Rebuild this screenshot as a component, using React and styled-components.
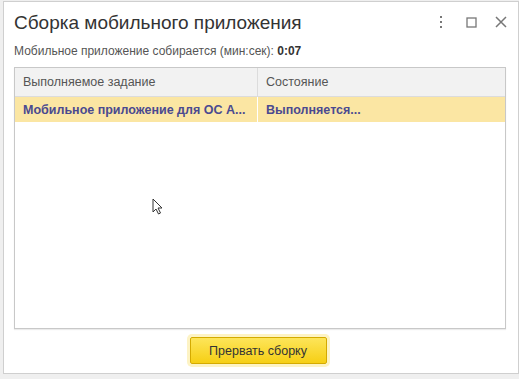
import React from 'react';
import styled, { createGlobalStyle } from 'styled-components';

const Global = createGlobalStyle`
    html, body {
        margin: 0;
        padding: 0;
        background: #efefef;
        font-family: "Liberation Sans", Arial, sans-serif;
    }
`;

const Page = styled.div`
    width: 519px;
    height: 379px;
    display: flex;
    align-items: flex-start;
    padding: 1px 0 0 3px;
    box-sizing: border-box;
    overflow: hidden;
`;

const Window = styled.div`
    position: relative;
    width: 516px;
    height: 373px;
    background: #ffffff;
    border: 1px solid #cfcfcf;
    box-sizing: border-box;
    display: flex;
    flex-direction: column;
    padding: 0 12px 0 10px;
`;

const TitleBar = styled.div`
    display: flex;
    align-items: center;
    height: 40px;
`;

const Title = styled.div`
    flex: 1;
    font-size: 19px;
    color: #333333;
    padding-top: 2px;
`;

const Tools = styled.div`
    display: flex;
    align-items: center;
    gap: 12px;
    margin-right: -4px;
`;

const ToolButton = styled.div`
    width: 18px;
    height: 18px;
    display: flex;
    align-items: center;
    justify-content: center;
    color: #777777;
`;

const Status = styled.div`
    font-size: 12px;
    color: #555555;
    margin-top: 2px;
    height: 18px;

    b {
        color: #333333;
    }
`;

const Table = styled.div`
    margin-top: 5px;
    height: 262px;
    box-sizing: border-box;
    border: 1px solid #c8c8c8;
    display: flex;
    flex-direction: column;
    box-shadow: 0 1px 1px rgba(0, 0, 0, 0.08);
`;

const Row = styled.div`
    display: grid;
    grid-template-columns: 243px 1fr;
    height: ${p => (p.$header ? 28 : 25)}px;
    background: ${p => (p.$header ? '#f2f2f2' : p.$selected ? '#fbe6a3' : '#ffffff')};
    border-bottom: ${p => (p.$header ? '1px solid #dcdcdc' : 'none')};
`;

const Cell = styled.div`
    display: flex;
    align-items: center;
    padding-left: 8px;
    font-size: 12.5px;
    color: ${p => (p.$header ? '#555555' : '#4a4a90')};
    font-weight: ${p => (p.$header ? 'normal' : 'bold')};
    border-right: ${p => (p.$last ? 'none' : p.$header ? '1px solid #dcdcdc' : '1px solid #ffffff')};
    white-space: nowrap;
    overflow: hidden;
`;

const Footer = styled.div`
    display: flex;
    justify-content: center;
    padding-top: 8px;
`;

const Button = styled.button`
    width: 137px;
    height: 27px;
    margin-right: 4px;
    border: 1px solid #d4aa00;
    border-radius: 2px;
    background: linear-gradient(#fde55a, #f6cf14);
    box-shadow: 0 0 0 3px #fdf3c4;
    font-family: "Liberation Sans", Arial, sans-serif;
    font-size: 12.5px;
    color: #333333;
`;

const Cursor = styled.svg`
    position: absolute;
    left: 148px;
    top: 196px;
`;

const App = () => {
    return (
        <>
            <Global />
            <Page>
                <Window>
                    <TitleBar>
                        <Title>Сборка мобильного приложения</Title>
                        <Tools>
                            <ToolButton>
                                <svg width="4" height="14" viewBox="0 0 4 14">
                                    <rect x="1" y="1" width="2" height="2" fill="#777" />
                                    <rect x="1" y="6" width="2" height="2" fill="#777" />
                                    <rect x="1" y="11" width="2" height="2" fill="#777" />
                                </svg>
                            </ToolButton>
                            <ToolButton>
                                <svg width="11" height="11" viewBox="0 0 11 11">
                                    <rect x="1" y="1" width="9" height="9" fill="none" stroke="#777" strokeWidth="1.3" />
                                </svg>
                            </ToolButton>
                            <ToolButton>
                                <svg width="12" height="12" viewBox="0 0 12 12">
                                    <path d="M1 1 L11 11 M11 1 L1 11" stroke="#777" strokeWidth="1.5" />
                                </svg>
                            </ToolButton>
                        </Tools>
                    </TitleBar>
                    <Status>
                        Мобильное приложение собирается (мин:сек): <b>0:07</b>
                    </Status>
                    <Table>
                        <Row $header>
                            <Cell $header>Выполняемое задание</Cell>
                            <Cell $header $last>Состояние</Cell>
                        </Row>
                        <Row $selected>
                            <Cell>Мобильное приложение для ОС А...</Cell>
                            <Cell $last>Выполняется...</Cell>
                        </Row>
                    </Table>
                    <Footer>
                        <Button>Прервать сборку</Button>
                    </Footer>
                    <Cursor width="12" height="18" viewBox="0 0 12 18">
                        <path d="M1 1 L1 14 L4 11 L6.5 16 L8.5 15 L6 10 L10 10 Z" fill="#fff" stroke="#333" strokeWidth="1" />
                    </Cursor>
                </Window>
            </Page>
        </>
    );
};

export default App;
